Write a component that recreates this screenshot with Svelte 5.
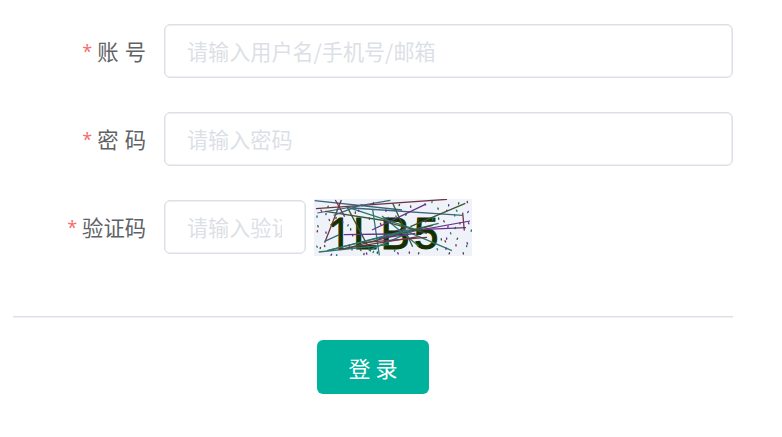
<script>
  const red = '#6d3442', blue = '#3b657c', teal = '#2c766b', green = '#3a5534', violet = '#65308f';
  const lines = [
    [8, 14, 270, 42, blue], [12, 38, 405, 10, red], [16, 51, 235, 13, blue], [40, 46, 245, 78, green],
    [88, 12, 38, 140, red], [70, 12, 98, 62, red], [105, 32, 176, 166, green], [110, 35, 310, 100, teal],
    [120, 36, 452, 58, blue], [182, 40, 202, 178, teal], [242, 22, 302, 152, green], [180, 102, 340, 25, violet],
    [295, 92, 460, 22, green], [95, 116, 235, 114, violet], [235, 118, 474, 75, violet], [250, 104, 462, 95, violet],
    [38, 136, 82, 116, blue], [20, 168, 230, 146, teal], [50, 163, 270, 106, teal], [80, 160, 320, 122, red],
    [45, 164, 380, 82, teal], [100, 158, 362, 88, green], [170, 163, 300, 106, teal], [210, 60, 320, 150, teal],
    [270, 100, 420, 164, teal], [452, 50, 457, 104, red], [200, 128, 310, 112, violet],
    [150, 140, 345, 124, red], [230, 80, 345, 112, green], [65, 58, 150, 26, blue]
  ];
  const colors = [red, violet, teal, green];
  const dots = [
    [28,44],[42,54],[75,42],[48,32],[130,50],[140,44],[150,28],[172,68],[184,22],[222,44],[246,42],[262,27],[296,32],[340,25],[360,18],[378,38],[404,44],[410,28],[434,44],[440,22],[466,18],[468,48],
    [15,62],[18,91],[16,106],[42,110],[15,152],[25,156],[38,150],[58,176],[74,178],[52,72],[72,66],[92,78],[108,88],[116,100],[122,118],[112,150],[120,160],[146,162],[156,174],[164,173],[184,168],[196,170],[206,84],[228,66],[252,62],[282,56],[318,72],[340,76],[362,70],[380,68],[396,76],[408,92],[428,58],[430,96],[444,82],[470,82],[478,104],
    [388,130],[400,136],[404,128],[416,112],[436,128],[432,148],[466,142],[464,150],[454,172],[412,172],[402,158],[376,160],[320,172],[292,170],[258,172],[248,164]
  ];
</script>

<main>
  <form>
    <div class="row">
      <label for="account"><i>*</i>账 号</label>
      <input id="account" placeholder="请输入用户名/手机号/邮箱" />
    </div>
    <div class="row">
      <label for="password"><i>*</i>密 码</label>
      <input id="password" type="password" placeholder="请输入密码" />
    </div>
    <div class="row">
      <label for="code"><i>*</i>验证码</label>
      <input id="code" class="short" placeholder="请输入验证码" />
      <svg class="captcha" viewBox="0 0 158 57" width="158" height="57">
        <rect width="158" height="57" fill="#eff2f9" />
        <g class="letters">
          <text class="one" x="13" y="50">1</text>
          <text x="39" y="50">L</text>
          <text x="66.5" y="50">B</text>
          <text x="100" y="50">5</text>
        </g>
        <g transform="scale(.33333) translate(-6 -9)">
          {#each lines as [a, b, c, d, color]}
            <line x1={a} y1={b} x2={c} y2={d} stroke={color} stroke-width="3.8" />
          {/each}
          {#each dots as [x, y], n}
            <ellipse cx={x} cy={y} rx="2.2" ry="4" fill={colors[n % 4]} transform={`rotate(${n * 37 % 60 - 30} ${x} ${y})`} />
          {/each}
        </g>
      </svg>
    </div>
  </form>
  <footer>
    <button type="button">登 录</button>
  </footer>
</main>

<style>
  :global(body) {
    background: #fff;
  }
  main {
    box-sizing: border-box;
    width: 782px;
    height: 437px;
    padding: 24px 49px 0 13px;
    font: 21px/54px "Noto Sans CJK SC", sans-serif;
    color: #606266;
  }
  form {
    display: flex;
    flex-direction: column;
    gap: 34px;
  }
  .row {
    display: flex;
    height: 54px;
  }
  label {
    box-sizing: border-box;
    width: 151px;
    flex: none;
    padding-right: 18px;
    text-align: right;
    white-space: nowrap;
    word-spacing: 1.5px;
    font-size: 21.3px;
  }
  i {
    display: inline-block;
    margin-right: 5px;
    line-height: 20px;
    transform: translateY(-2px);
    font-family: "Open Sans", sans-serif;
    font-style: normal;
    font-size: 18px;
    color: #f56c6c;
  }
  input {
    box-sizing: border-box;
    flex: 1;
    min-width: 0;
    height: 54px;
    padding: 0 23px 0 22px;
    border: 1px solid #dcdfe6;
    border-radius: 6px;
    box-shadow: inset 0 0 0 .5px #dcdfe6;
    background: #fff;
    font: inherit;
    font-size: 21.1px;
    outline: 0;
  }
  input::placeholder {
    color: #dcdfe6;
    opacity: 1;
  }
  .short {
    flex: 0 0 142px;
  }
  .captcha {
    display: block;
    margin: -1px 0 0 8px;
    overflow: hidden;
  }
  .letters {
    font: 44px "Liberation Sans", sans-serif;
    fill: #153000;
    stroke: #153000;
    stroke-width: 1;
  }
  .one {
    font-family: "Open Sans", sans-serif;
  }
  footer {
    display: flex;
    justify-content: center;
    margin-top: 62px;
    padding-top: 23px;
    border-top: 1px solid #dcdfe6;
    box-shadow: inset 0 1px #f0f1f5;
  }
  button {
    width: 112px;
    height: 54px;
    padding: 0;
    border: 0;
    border-radius: 6px;
    background: #00b29c;
    color: #fff;
    font: 22px/54px "Noto Sans CJK SC", sans-serif;
  }
</style>
